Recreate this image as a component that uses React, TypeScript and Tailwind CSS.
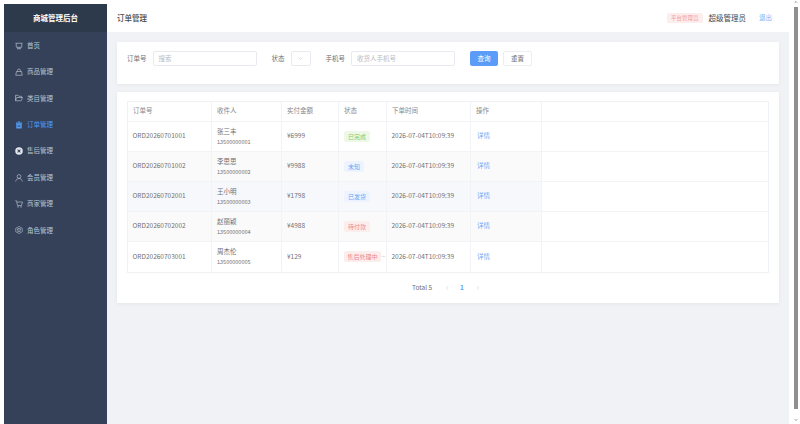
import React from 'react';
import { ChevronDown, ChevronLeft, ChevronRight } from 'lucide-react';

type IconProps = { className?: string };

const MonitorIcon = ({ className }: IconProps) => (
  <svg className={className} viewBox="0 0 16 16" fill="none" stroke="currentColor" strokeWidth={1.3}>
    <path d="M1 2.500h14M2.500 2.500v8h11v-8M6 10.500v3M10 10.500v3M4 13.500h8" />
  </svg>
);

const BagIcon = ({ className }: IconProps) => (
  <svg className={className} viewBox="0 0 16 16" fill="none" stroke="currentColor" strokeWidth={1.3}>
    <path d="M1.500 14.500 3 7h10l1.500 7.500zM5 7V5a3 3 0 0 1 6 0v2" />
  </svg>
);

const FolderIcon = ({ className }: IconProps) => (
  <svg className={className} viewBox="0 0 16 16" fill="none" stroke="currentColor" strokeWidth={1.3}>
    <path d="M1 13.500v-11h5l1.500 2H13v2.500M1 13.500h11.500L15 7H3.500z" />
  </svg>
);

const ClipboardIcon = ({ className }: IconProps) => (
  <svg className={className} viewBox="0 0 16 16" fill="currentColor">
    <path d="M5.500 1h5v2.500h-5z" />
    <path fillRule="evenodd" d="M2.500 2.500h2v2h7v-2h2V15h-11zM5 8v1h6V8zm0 3v1h6v-1z" />
  </svg>
);

const CircleIcon = ({ className }: IconProps) => (
  <svg className={className} viewBox="0 0 16 16" fill="currentColor">
    <path fillRule="evenodd" d="M8 .500a7.500 7.500 0 1 1 0 15 7.500 7.500 0 0 1 0-15zM5.800 4.500 4.500 5.800 6.700 8l-2.200 2.200 1.300 1.300L8 9.300l2.200 2.200 1.300-1.300L9.300 8l2.200-2.200-1.300-1.300L8 6.700z" />
  </svg>
);

const UserIcon = ({ className }: IconProps) => (
  <svg className={className} viewBox="0 0 16 16" fill="none" stroke="currentColor" strokeWidth={1.3}>
    <circle cx="8" cy="5" r="3.800" />
    <path d="M1.500 15c0-3.500 2.800-6 6.500-6s6.500 2.500 6.500 6" />
  </svg>
);

const CartIcon = ({ className }: IconProps) => (
  <svg className={className} viewBox="0 0 16 16" fill="none" stroke="currentColor" strokeWidth={1.3}>
    <path d="M.500 1.500H3l2 9.500h8l2-7H3.800" />
    <circle cx="6" cy="13.800" r=".8" />
    <circle cx="12" cy="13.800" r=".8" />
  </svg>
);

const RoleIcon = ({ className }: IconProps) => (
  <svg className={className} viewBox="0 0 16 16" fill="none" stroke="currentColor" strokeWidth={1.2}>
    <path d="M8 1 14.500 4.500v7L8 15l-6.500-3.500v-7z" />
    <path d="M4 6.500 8 4.500l4 2-4 2zM4 9.500l4 2 4-2" />
  </svg>
);

const iconClass = 'h-[8px] w-[8px]';

const menu = [
  { label: '首页', icon: <MonitorIcon className={iconClass} /> },
  { label: '商品管理', icon: <BagIcon className={iconClass} /> },
  { label: '类目管理', icon: <FolderIcon className={iconClass} /> },
  { label: '订单管理', icon: <ClipboardIcon className={iconClass} />, active: true },
  { label: '售后管理', icon: <CircleIcon className={iconClass} />, bright: true },
  { label: '会员管理', icon: <UserIcon className={iconClass} /> },
  { label: '商家管理', icon: <CartIcon className={iconClass} /> },
  { label: '角色管理', icon: <RoleIcon className={iconClass} /> },
];

const tagStyles: Record<string, string> = {
  green: 'bg-[#eef8e8] text-[#85cd62]',
  blue: 'bg-[#edf4ff] text-[#66a9f5]',
  red: 'bg-[#fdeeee] text-[#ef8585]',
};

const orders = [
  { no: 'ORD20260701001', name: '张三丰', phone: '13500000001', amount: '¥6999', status: '已完成', tag: 'green', bg: 'bg-white' },
  { no: 'ORD20260701002', name: '李思思', phone: '13500000002', amount: '¥9988', status: '未知', tag: 'blue', bg: 'bg-[#fafafa]' },
  { no: 'ORD20260702001', name: '王小明', phone: '13500000003', amount: '¥1798', status: '已发货', tag: 'blue', bg: 'bg-[#f6f8fb]' },
  { no: 'ORD20260702002', name: '赵丽颖', phone: '13500000004', amount: '¥4988', status: '待付款', tag: 'red', bg: 'bg-[#fafafa]' },
  { no: 'ORD20260703001', name: '周杰伦', phone: '13500000005', amount: '¥129', status: '售后处理中', tag: 'red', bg: 'bg-white', clipped: true },
];

const cellBorder = 'border-r border-[#f2f3f6] pl-[5px] flex items-center shrink-0';

export default function App() {
  return (
    <div className="flex h-[424px] w-[800px] overflow-hidden bg-white font-['Noto_Sans_CJK_SC','Noto_Sans',sans-serif] text-[6.5px] text-[#6e7074]">
      <div className="w-[4px] shrink-0" />

      {/* Sidebar */}
      <aside className="mt-[4px] flex w-[103px] shrink-0 flex-col bg-[#344158]">
        <div className="flex h-[28px] shrink-0 items-center justify-center bg-[#2c3a4b] text-[7.500px] font-bold text-white">
          商城管理后台
        </div>
        <nav className="flex flex-col pt-[0.500px]">
          {menu.map((item) => (
            <div
              key={item.label}
              className={`flex h-[26.400px] items-center gap-[4px] pl-[10px] ${item.active ? 'text-[#4f9cf5]' : 'text-[#b9c5d3]'}`}
            >
              <span className={`flex w-[9px] justify-center ${item.bright ? 'text-[#e4e9ef]' : ''}`}>{item.icon}</span>
              <span>{item.label}</span>
            </div>
          ))}
        </nav>
      </aside>

      {/* Main */}
      <div className="flex min-w-0 flex-1 flex-col bg-[#f0f2f5]">
        <header className="flex h-[32px] shrink-0 items-center justify-between bg-white pl-[10px] pr-[17px] pt-[4px]">
          <span className="text-[7.500px] font-medium text-[#45474b]">订单管理</span>
          <div className="flex items-center">
            <span className="rounded-[2px] bg-[#fdeeee] px-[4px] py-[1.500px] text-[5.500px] leading-[7px] text-[#f19a9a]">平台管理员</span>
            <span className="ml-[6px] text-[7.500px] text-[#45474b]">超级管理员</span>
            <span className="ml-[13px] text-[#7ab2f5]">退出</span>
          </div>
        </header>

        <main className="flex flex-col gap-[8px] px-[10px] pt-[9.500px]">
          {/* Filter */}
          <section className="flex h-[42.500px] items-start rounded-[1px] bg-white px-[10px] pt-[9.500px] shadow-[0_1px_4px_rgba(0,0,0,0.05)]">
            <label className="flex h-[15px] items-center">订单号</label>
            <div className="ml-[6px] flex h-[15px] w-[104px] items-center rounded-[2px] border border-[#e8eaef] px-[5px] text-[#b9bcc2]">搜索</div>
            <label className="ml-[15px] flex h-[15px] items-center">状态</label>
            <div className="ml-[6px] flex h-[15px] w-[20px] items-center justify-center rounded-[2px] border border-[#e8eaef] text-[#b0b4bc]">
              <ChevronDown className="h-[7px] w-[7px]" strokeWidth={1.5} />
            </div>
            <label className="ml-[15px] flex h-[15px] items-center">手机号</label>
            <div className="ml-[6px] flex h-[15px] w-[104px] items-center rounded-[2px] border border-[#e8eaef] px-[5px] text-[#b9bcc2]">收货人手机号</div>
            <button className="ml-[15px] flex h-[15px] w-[28px] items-center justify-center rounded-[2px] bg-[#5a9cf8] text-white">查询</button>
            <button className="ml-[5px] flex h-[15px] w-[29px] items-center justify-center rounded-[2px] border border-[#eceef2] bg-white">重置</button>
          </section>

          {/* Orders */}
          <section className="h-[211px] rounded-[1px] bg-white px-[10px] pt-[9px] shadow-[0_1px_4px_rgba(0,0,0,0.05)]">
            <div className="border border-[#f0f1f4]">
              <div className="flex h-[19.500px] border-b border-[#f2f3f6] text-[#85878c]">
                <div className={`${cellBorder} w-[84px]`}>订单号</div>
                <div className={`${cellBorder} w-[70px]`}>收件人</div>
                <div className={`${cellBorder} w-[57px]`}>实付金额</div>
                <div className={`${cellBorder} w-[48px]`}>状态</div>
                <div className={`${cellBorder} w-[84px]`}>下单时间</div>
                <div className={`${cellBorder} w-[71px]`}>操作</div>
              </div>
              {orders.map((o, i) => (
                <div key={o.no} className={`flex h-[30px] ${i < orders.length - 1 ? 'border-b border-[#f2f3f6]' : ''}`}>
                  <div className={`${cellBorder} ${o.bg} w-[84px] !pl-[4.500px]`}>{o.no}</div>
                  <div className={`${cellBorder} ${o.bg} w-[70px] flex-col !items-start justify-center`}>
                    <span className="leading-[11px]">{o.name}</span>
                    <span className="text-[5.500px] leading-[10px]">{o.phone}</span>
                  </div>
                  <div className={`${cellBorder} ${o.bg} w-[57px]`}>{o.amount}</div>
                  <div className={`${cellBorder} ${o.bg} w-[48px]`}>
                    <span className={`inline-block h-[11px] shrink-0 whitespace-nowrap rounded-[2px] text-[6px] leading-[11px] ${o.clipped ? 'px-[3.500px]' : 'px-[4px]'} ${tagStyles[o.tag]}`}>
                      {o.status}
                    </span>
                    {o.clipped && <span className="ml-[0.500px] text-[4px]">…</span>}
                  </div>
                  <div className={`${cellBorder} ${o.bg} w-[84px] !pl-[4.500px]`}>2026-07-04T10:09:39</div>
                  <div className={`${cellBorder} ${o.bg} w-[71px] !pl-[6px] text-[#6aa8f5]`}>详情</div>
                </div>
              ))}
            </div>

            <div className="mt-[9.500px] ml-[285px] flex h-[11px] items-center">
              <span className="w-[27px]">Total 5</span>
              <ChevronLeft className="ml-[5px] h-[6px] w-[6px] text-[#c0c4cc]" strokeWidth={2} />
              <span className="ml-[10px] font-bold text-[#5ea3f5]">1</span>
              <ChevronRight className="ml-[11px] h-[6px] w-[6px] text-[#c0c4cc]" strokeWidth={2} />
            </div>
          </section>
        </main>
      </div>

      {/* Window scrollbar */}
      <div className="flex w-[11px] shrink-0 flex-col items-center bg-white pl-[5px] pr-[2px]">
        <ChevronDown className="h-[4px] w-[4px] rotate-180 text-[#606060]" strokeWidth={4} />
        <div className="mt-[3px] w-[4px] flex-1 bg-[#8f8f8f]" />
        <ChevronDown className="mb-[2px] mt-[9px] h-[4px] w-[4px] text-[#606060]" strokeWidth={4} />
      </div>
    </div>
  );
}
